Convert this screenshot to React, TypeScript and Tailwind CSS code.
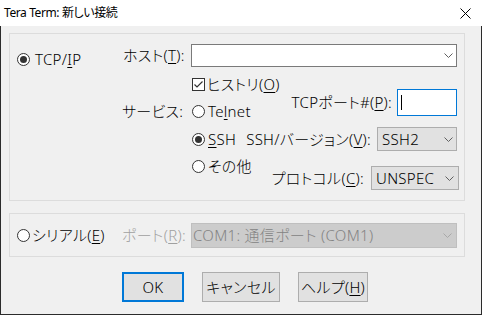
import React from "react";

const F = "font-[family-name:'Noto_Sans','Noto_Sans_CJK_JP',sans-serif]";

function Radio({ checked }: { checked?: boolean }) {
  return (
    <svg width="13" height="13" viewBox="0 0 13 13" className="shrink-0">
      <circle cx="6.5" cy="6.5" r="6" fill="#fff" stroke="#333" strokeWidth="1" />
      {checked && <circle cx="6.5" cy="6.5" r="3.5" fill="#333" />}
    </svg>
  );
}

function Check() {
  return (
    <svg width="13" height="13" viewBox="0 0 13 13" className="shrink-0">
      <rect x="0.5" y="0.5" width="12" height="12" fill="#fff" stroke="#333" />
      <path d="M2.5 6.5 L5 9 L10.5 3.5" stroke="#333" strokeWidth="1.2" fill="none" />
    </svg>
  );
}

function Chevron({ color = "#606060" }: { color?: string }) {
  return (
    <svg width="9" height="5" viewBox="0 0 9 5" className="shrink-0">
      <path d="M0.5 0.5 L4.5 4.5 L8.5 0.5" stroke={color} strokeWidth="1" fill="none" />
    </svg>
  );
}

function U({ children }: { children: React.ReactNode }) {
  return <span className="underline underline-offset-[2px] decoration-1">{children}</span>;
}

export default function App() {
  return (
    <div
      className={`w-[482px] h-[315px] flex flex-col text-[15px] font-light tracking-[0.3px] leading-none text-black whitespace-nowrap ${F} [font-feature-settings:'palt']`}
    >
      <div className="h-[26px] shrink-0 bg-white flex items-center justify-between pl-[4px] pr-[11px]">
        <span className="text-[12px] font-normal tracking-[-0.4px]">Tera Term: 新しい接続</span>
        <svg width="11" height="11" viewBox="0 0 11 11">
          <path d="M0.5 0.5 L10.5 10.5 M10.5 0.5 L0.5 10.5" stroke="#000" strokeWidth="1" />
        </svg>
      </div>
      <div className="flex-1 bg-[#f0f0f0] border-x border-b border-[#2b2b2b] px-[8px] pt-[7px] flex flex-col">
        {/* TCP/IP group */}
        <div className="w-[456px] h-[168px] shrink-0 border border-[#dcdcdc] flex">
          <div className="w-[112px] shrink-0 pl-[7px] pt-[17px]">
            <div className="h-[16px] flex items-center gap-[5px]">
              <Radio checked />
              <span>TCP/<U>I</U>P</span>
            </div>
          </div>
          <div className="flex-1 flex flex-col">
            <div className="mt-[10px] h-[23px] flex items-center">
              <span className="w-[69px] pl-[1px]">
                ホスト(<U>T</U>):
              </span>
              <div className="w-[266px] h-[23px] bg-white border border-[#7a7a7a] flex items-center justify-end pr-[3px]">
                <Chevron />
              </div>
            </div>
            <div className="mt-[12px] h-[10px] flex items-center gap-[2px] ml-[70px]">
              <Check />
              <span>
                ヒストリ(<U>O</U>)
              </span>
            </div>
            <div className="flex">
              <div className="w-[69px] shrink-0">
                <div className="mt-[14px] h-[16px] flex items-center">サービス:</div>
              </div>
              <div className="w-[55px] shrink-0 pl-[1px] flex flex-col">
                <div className="mt-[14px] h-[16px] flex items-center gap-[3px]">
                  <Radio />
                  <span>
                    Te<U>l</U>net
                  </span>
                </div>
                <div className="mt-[12px] h-[16px] flex items-center gap-[3px]">
                  <Radio checked />
                  <span>
                    <U>S</U>SH
                  </span>
                </div>
                <div className="mt-[11px] h-[16px] flex items-center gap-[3px]">
                  <Radio />
                  <span>その他</span>
                </div>
              </div>
              <div className="flex-1 min-w-0 pr-[7px] flex flex-col items-end">
                <div className="h-[27px] flex items-center gap-[5px]">
                  <span>
                    TCPポート#(<U>P</U>):
                  </span>
                  <div className="w-[60px] h-[27px] bg-white border border-[#0078d7] flex items-center pl-[3px]">
                    <div className="w-[1px] h-[15px] bg-black" />
                  </div>
                </div>
                <div className="mt-[11px] h-[24px] flex items-center gap-[6px]">
                  <span>
                    SSH/バージョン(<U>V</U>):
                  </span>
                  <div className="w-[80px] h-[24px] bg-[#e1e1e1] border border-[#adadad] flex items-center justify-between pl-[4px] pr-[3px]">
                    <span>SSH2</span>
                    <Chevron />
                  </div>
                </div>
                <div className="mt-[15px] h-[24px] flex items-center gap-[7px] mr-[-2px]">
                  <span>
                    プロトコル(<U>C</U>):
                  </span>
                  <div className="w-[88px] h-[24px] bg-[#e1e1e1] border border-[#adadad] flex items-center justify-between pl-[4px] pr-[4px]">
                    <span>UNSPEC</span>
                    <Chevron />
                  </div>
                </div>
              </div>
            </div>
          </div>
        </div>

        {/* Serial group */}
        <div className="mt-[12px] w-[456px] h-[44px] shrink-0 border border-[#dcdcdc] flex items-center">
          <div className="w-[112px] shrink-0 pl-[7px] flex items-center gap-[2px]">
            <Radio />
            <span>
              シリアル(<U>E</U>)
            </span>
          </div>
          <span className="w-[69px] shrink-0 text-[#a0a0a0]">
            ポート(<U>R</U>):
          </span>
          <div className="w-[266px] h-[25px] bg-[#cccccc] border border-[#bfbfbf] flex items-center justify-between pl-[1px] pr-[4px] text-[#838383]">
            <span>COM1: 通信ポート (COM1)</span>
            <Chevron color="#a8a8a8" />
          </div>
        </div>

        {/* Buttons */}
        <div className="mt-[15px] pl-[113px] flex gap-[18px]">
          <div className="w-[62px] h-[30px] border-2 border-[#0078d7] bg-[#e1e1e1] flex items-center justify-center">
            OK
          </div>
          <div className="w-[78px] h-[30px] border border-[#adadad] bg-[#e1e1e1] flex items-center justify-center">
            キャンセル
          </div>
          <div className="w-[70px] h-[30px] border border-[#adadad] bg-[#e1e1e1] flex items-center justify-center">
            ヘルプ(<U>H</U>)
          </div>
        </div>
      </div>
    </div>
  );
}
